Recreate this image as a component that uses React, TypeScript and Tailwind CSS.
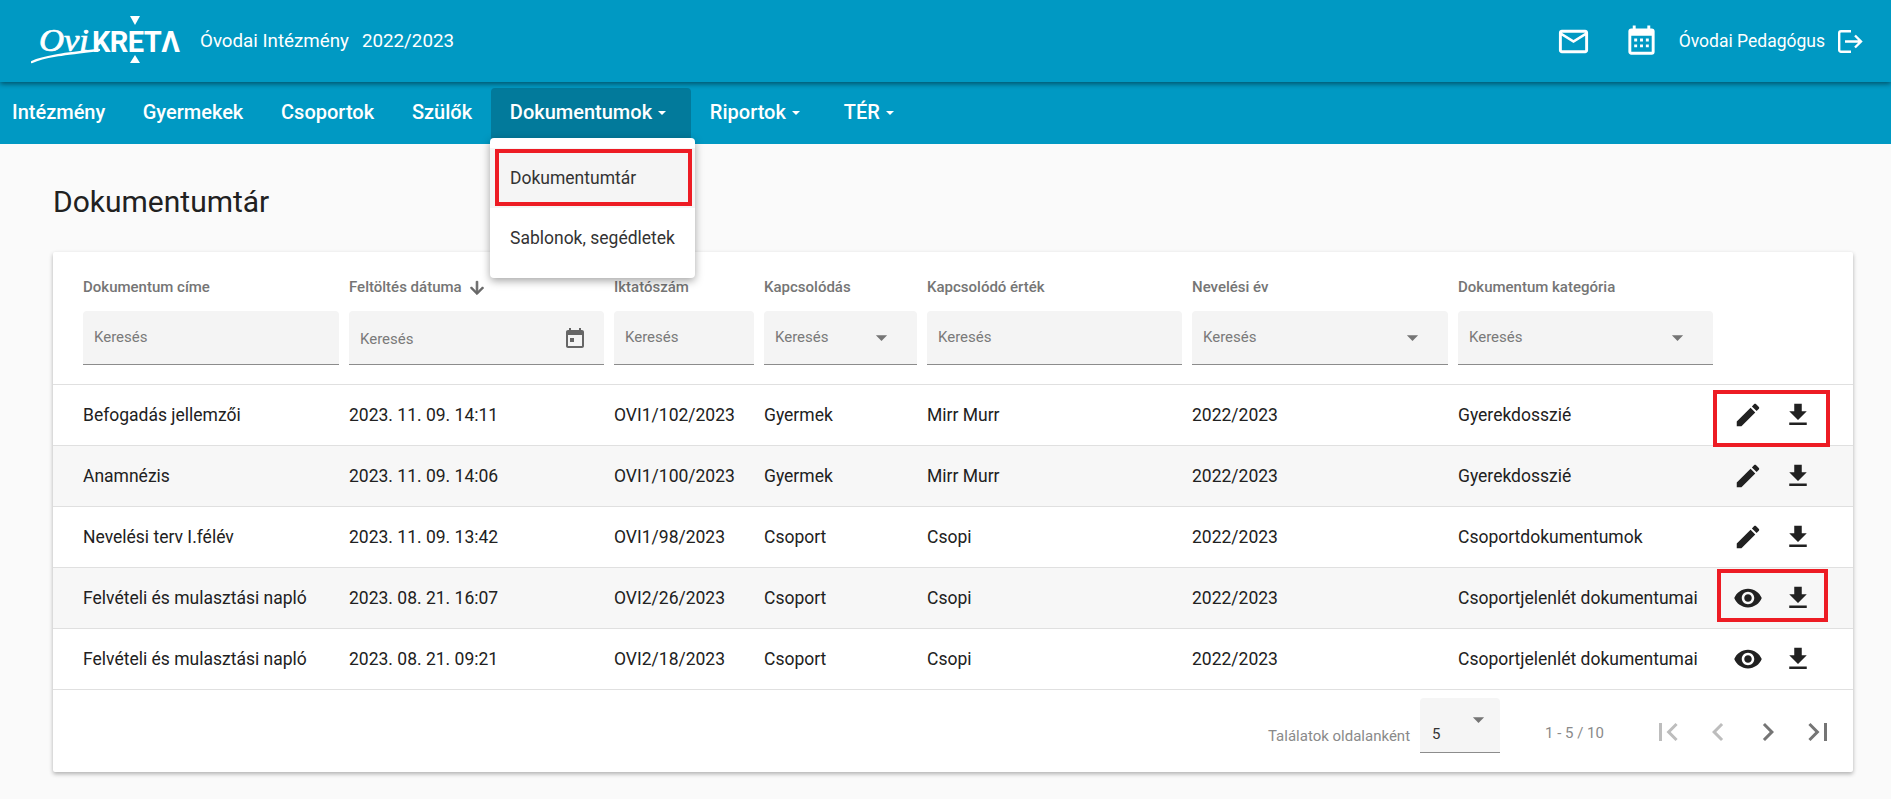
import React from "react";

const colsClass = "grid grid-cols-[266px_265px_150px_163px_265px_266px_260px_1fr] pl-[30px]";

const Icon = ({ d, size, className = "" }: { d: string; size: number; className?: string }) => (
  <svg width={size} height={size} viewBox="0 0 24 24" fill="currentColor" className={"block shrink-0 " + className}>
    <path d={d} />
  </svg>
);

const P = {
  mail: "M20 4H4c-1.1 0-1.99.9-1.99 2L2 18c0 1.1.9 2 2 2h16c1.1 0 2-.9 2-2V6c0-1.1-.9-2-2-2zm0 14H4V8l8 5 8-5v10zm-8-7L4 6h16l-8 5z",
  cal: "M9,10V12H7V10H9M13,10V12H11V10H13M17,10V12H15V10H17M19,3A2,2 0 0,1 21,5V19A2,2 0 0,1 19,21H5C3.89,21 3,20.1 3,19V5A2,2 0 0,1 5,3H6V1H8V3H16V1H18V3H19M19,19V8H5V19H19M9,14V16H7V14H9M13,14V16H11V14H13M17,14V16H15V14H17Z",
  event: "M7 11h4v4H7zM16 1v2H8V1H6v2H5c-1.11 0-1.99.9-1.99 2L3 19c0 1.1.89 2 2 2h14c1.1 0 2-.9 2-2V5c0-1.1-.9-2-2-2h-1V1h-2zm3 18H5V8h14v11z",
  edit: "M3 17.25V21h3.75L17.81 9.94l-3.75-3.75L3 17.25zM20.71 7.04c.39-.39.39-1.02 0-1.41l-2.34-2.34c-.39-.39-1.02-.39-1.41 0l-1.83 1.83 3.75 3.75 1.83-1.83z",
  download: "M19 9h-4V3H9v6H5l7 7 7-7zM5 18v2h14v-2H5z",
  eye: "M12 4.5C7 4.5 2.73 7.61 1 12c1.73 4.39 6 7.5 11 7.5s9.27-3.11 11-7.5c-1.73-4.39-6-7.5-11-7.5zM12 17c-2.76 0-5-2.24-5-5s2.24-5 5-5 5 2.24 5 5-2.24 5-5 5zm0-8c-1.66 0-3 1.34-3 3s1.34 3 3 3 3-1.34 3-3-1.34-3-3-3z",
  first: "M18.41 16.59L13.82 12l4.59-4.59L17 6l-6 6 6 6zM6 6h2v12H6z",
  prev: "M15.41 7.41L14 6l-6 6 6 6 1.41-1.41L10.83 12z",
  next: "M10 6L8.59 7.41 13.17 12l-4.58 4.59L10 18l6-6z",
  last: "M5.59 7.41L10.18 12l-4.59 4.59L7 18l6-6-6-6zM16 6h2v12h-2z",
  down: "M20 12l-1.41-1.41L13 16.17V4h-2v12.17l-5.58-5.59L4 12l8 8 8-8z",
  tri: "M7 10l5 5 5-5z",
};

const Logo = () => (
  <svg width="152" height="50" viewBox="0 0 152 50" className="block shrink-0">
    <text x="8" y="35" fontFamily="'Liberation Serif', serif" fontStyle="italic" fontSize="31" fill="#fff" stroke="#fff" strokeWidth="0.7" textLength="50" lengthAdjust="spacingAndGlyphs">Ovi</text>
    <path d="M1 46 C 14 40, 34 38, 68 34" stroke="#fff" strokeWidth="2.4" fill="none" strokeLinecap="round" />
    <text x="61" y="36" fontFamily="Roboto, sans-serif" fontWeight="700" fontSize="29" letterSpacing="-0.6" fill="#fff">KRETΛ</text>
    <polygon points="99,0 109,0 104,9" fill="#fff" />
    <polygon points="104,39 109,47 99,47" fill="#fff" />
  </svg>
);

const LogoutIcon = () => (
  <svg width="25" height="23" viewBox="0 0 25 23" fill="none" stroke="#fff" strokeWidth="2.4" className="block shrink-0">
    <path d="M13 1.2H3a1.8 1.8 0 0 0-1.8 1.8v17a1.8 1.8 0 0 0 1.8 1.8h10" />
    <path d="M7 11.5h16M17 5.5l6 6-6 6" />
  </svg>
);

const NavItem = ({ label, caret, active, first }: { label: string; caret?: boolean; active?: boolean; first?: boolean }) => (
  <div
    className={
      "flex h-[56px] items-center gap-[6px] rounded-t-[4px] pb-[8px] text-[20px] font-medium text-white " +
      (first ? "pl-3 pr-[18.5px] " : "px-[18.9px] ") +
      (active ? "bg-[#027a9b]" : "")
    }
  >
    {label}
    {caret && <span className="mr-[6px] mt-[2px] h-0 w-0 border-x-[4px] border-t-[4px] border-x-transparent border-t-white" />}
  </div>
);

const Filter = ({ icon, lower }: { icon?: "tri" | "event"; lower?: boolean }) => (
  <div
    className={
      "relative flex h-[54px] items-center justify-between rounded-t-[4px] border-b-[1.5px] border-[#8c8c8c] bg-[#f4f4f4] pl-[11px] text-[15px] text-[#7a7a7a] " +
      (lower ? "pt-[3px] " : "") +
      (icon === "event" ? "pr-[17px]" : "pr-[22px]")
    }
  >
    <span>Keresés</span>
    {icon === "tri" && <Icon d={P.tri} size={27} className="text-[#757575]" />}
    {icon === "event" && <Icon d={P.event} size={24} className="text-[#666]" />}
  </div>
);

const heads: { t: string; filter: React.ReactNode; w?: string; arrow?: boolean }[] = [
  { t: "Dokumentum címe", filter: <Filter />, w: "w-[256px]" },
  { t: "Feltöltés dátuma", filter: <Filter icon="event" lower />, w: "w-[255px]", arrow: true },
  { t: "Iktatószám", filter: <Filter />, w: "w-[140px]" },
  { t: "Kapcsolódás", filter: <Filter icon="tri" />, w: "w-[153px]" },
  { t: "Kapcsolódó érték", filter: <Filter />, w: "w-[255px]" },
  { t: "Nevelési év", filter: <Filter icon="tri" />, w: "w-[256px]" },
  { t: "Dokumentum kategória", filter: <Filter icon="tri" />, w: "w-[255px]" },
];

const rows = [
  ["Befogadás jellemzői", "2023. 11. 09. 14:11", "OVI1/102/2023", "Gyermek", "Mirr Murr", "2022/2023", "Gyerekdosszié", "edit"],
  ["Anamnézis", "2023. 11. 09. 14:06", "OVI1/100/2023", "Gyermek", "Mirr Murr", "2022/2023", "Gyerekdosszié", "edit"],
  ["Nevelési terv I.félév", "2023. 11. 09. 13:42", "OVI1/98/2023", "Csoport", "Csopi", "2022/2023", "Csoportdokumentumok", "edit"],
  ["Felvételi és mulasztási napló", "2023. 08. 21. 16:07", "OVI2/26/2023", "Csoport", "Csopi", "2022/2023", "Csoportjelenlét dokumentumai", "eye"],
  ["Felvételi és mulasztási napló", "2023. 08. 21. 09:21", "OVI2/18/2023", "Csoport", "Csopi", "2022/2023", "Csoportjelenlét dokumentumai", "eye"],
];

export default function App() {
  return (
    <div className="h-[799px] overflow-hidden bg-[#fafafa] [font-family:Roboto,sans-serif]">
      <header className="relative z-10 flex h-[82px] items-center justify-between bg-[#0099c3] pl-[31px] pr-[28px] shadow-[0_2px_5px_rgba(0,0,0,0.45)]">
        <div className="flex items-center">
          <Logo />
          <div className="ml-[17px] flex gap-[13px] text-[18.75px] text-white">
            <span>Óvodai Intézmény</span>
            <span>2022/2023</span>
          </div>
        </div>
        <div className="flex items-center text-white">
          <Icon d={P.mail} size={35} />
          <Icon d={P.cal} size={35} className="ml-[33px]" />
          <span className="ml-[20px] text-[17.5px]">Óvodai Pedagógus</span>
          <span className="ml-[13px]"><LogoutIcon /></span>
        </div>
      </header>

      <nav className="relative flex h-[62px] items-end bg-[#0099c3]">
        <NavItem label="Intézmény" first />
        <NavItem label="Gyermekek" />
        <NavItem label="Csoportok" />
        <NavItem label="Szülők" />
        <NavItem label="Dokumentumok" caret active />
        <NavItem label="Riportok" caret />
        <NavItem label="TÉR" caret />
        <div className="absolute left-[490px] top-[56px] z-20 w-[205px] rounded-[4px] bg-white py-[10px] text-[17.5px] text-[#333] shadow-[0_3px_8px_rgba(0,0,0,0.35)]">
          <div className="relative flex h-[60px] items-center bg-[#f5f5f5] pl-[20px]">
            Dokumentumtár
            <div className="absolute left-[5px] top-[1px] h-[57px] w-[197px] border-[4px] border-[#ed1c24]" />
          </div>
          <div className="flex h-[60px] items-center pl-[20px]">Sablonok, segédletek</div>
        </div>
      </nav>

      <main className="pl-[53px] pr-[38px]">
        <h1 className="mb-[28px] pt-[36px] text-[30px] font-normal leading-[44px] text-[#212121]">Dokumentumtár</h1>
        <div className="h-[520px] rounded-[2px] bg-white shadow-[0_2px_4px_rgba(0,0,0,0.3)]">
          <div className={colsClass + " h-[133px] border-b-[1.5px] border-[#e0e0e0] pt-[25px]"}>
            {heads.map((h) => (
              <div key={h.t} className={h.w}>
                <div className="flex h-[20px] items-center gap-[5px] text-[15px] font-medium text-[#757575]">
                  {h.t}
                  {h.arrow && <Icon d={P.down} size={20} className="mt-[2px] stroke-current stroke-1 text-[#666]" />}
                </div>
                <div className="mt-[14px]">{h.filter}</div>
              </div>
            ))}
          </div>

          {rows.map((r, i) => (
            <div
              key={i}
              className={colsClass + " h-[61px] items-center border-b-[1.5px] border-[#e0e0e0] text-[17.5px] text-[#212121] " + (i % 2 === 1 ? "bg-[#f7f7f7]" : "")}
            >
              {r.slice(0, 7).map((c, j) => (
                <div key={j} className="whitespace-nowrap">{c}</div>
              ))}
              <div className="relative flex items-center gap-[20px] pl-[15px] text-[#212121]">
                <Icon d={r[7] === "edit" ? P.edit : P.eye} size={30} />
                <Icon d={P.download} size={30} />
                {i === 0 && <div className="absolute left-[-5px] top-[-10px] h-[57px] w-[117px] border-[4px] border-[#ed1c24]" />}
                {i === 3 && <div className="absolute left-[-1px] top-[-14px] h-[53px] w-[111px] border-[4px] border-[#ed1c24]" />}
              </div>
            </div>
          ))}

          <div className="flex h-[82px] items-start justify-end pr-[17px] text-[15px] text-[#8a8a8a]">
            <span className="mt-[35px]">Találatok oldalanként</span>
            <div className="relative ml-[10px] mt-[8px] h-[55px] w-[80px] rounded-t-[4px] border-b-[1.5px] border-[#8c8c8c] bg-[#f5f5f5]">
              <span className="absolute left-[12px] top-[25px] text-[15px] text-[#333]">5</span>
              <Icon d={P.tri} size={27} className="absolute left-[45px] top-[8px] text-[#757575]" />
            </div>
            <span className="ml-[45px] mt-[32px]">1 - 5 / 10</span>
            <div className="ml-[46px] mt-[24px] flex gap-[14px]">
              <Icon d={P.first} size={36} className="text-[#bdbdbd]" />
              <Icon d={P.prev} size={36} className="text-[#bdbdbd]" />
              <Icon d={P.next} size={36} className="text-[#757575]" />
              <Icon d={P.last} size={36} className="text-[#757575]" />
            </div>
          </div>
        </div>
      </main>
    </div>
  );
}
